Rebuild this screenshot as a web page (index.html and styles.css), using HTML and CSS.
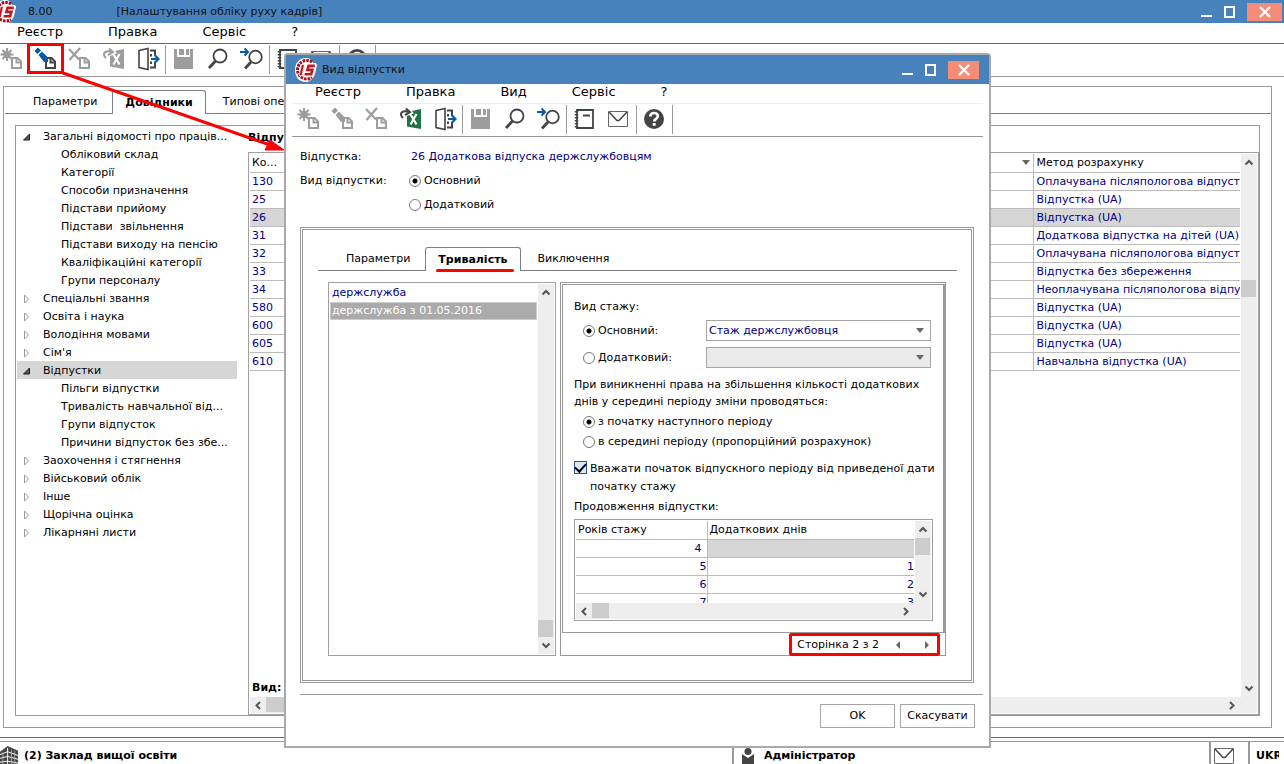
FILE: index.html
```html
<!DOCTYPE html>
<html lang="uk">
<head>
<meta charset="utf-8">
<title>Налаштування обліку руху кадрів</title>
<link rel="stylesheet" href="styles.css">
</head>
<body>
<svg class="defs" aria-hidden="true">
  <symbol id="logo" viewBox="0 0 24 26">
    <path d="M12 1c4 0 6 2 7 5h3l1 2-2 9c-2 5-5 8-9 8C5 25 1 20 1 13S5 1 12 1z" fill="#fff"/>
    <path d="M18 5A9.300 9.300 0 1 0 18 20.500" fill="none" stroke="#a01018" stroke-width="3" stroke-dasharray="2.500 1"/>
    <path d="M7.500 7.500h2.900l-2.400 11H5.100z" fill="#c01820" stroke="#fff" stroke-width=".6"/>
    <path d="M20.800 8.900h-6.200l-1.200 4h5l-1.200 4.300h-6.600" fill="none" stroke="#c01820" stroke-width="2.600"/>
  </symbol>
  <symbol id="page" viewBox="0 0 24 24">
    <path d="M12 11h5.500l3.500 3.500v6.500H12z" fill="#fff" stroke="currentColor" stroke-width="2"/>
    <path d="M16.500 11v4.500H21" fill="none" stroke="currentColor" stroke-width="2"/>
  </symbol>
  <symbol id="new" viewBox="0 0 24 24">
    <path d="M7 1v13M.5 7.500h13M2.400 3l9.200 9M11.600 3l-9.200 9" stroke="currentColor" stroke-width="2" fill="none"/>
    <circle cx="7" cy="7.500" r="3.800" fill="currentColor"/>
    <use href="#page"/>
  </symbol>
  <symbol id="edit" viewBox="0 0 24 24">
    <use href="#page"/>
    <path d="M.5 4l3.500-3.500 3 3L3.500 7zM4.500 8l3.500-3.500 6 6v4.500h-4z" class="pen"/>
  </symbol>
  <symbol id="delete" viewBox="0 0 24 24">
    <path d="M1 2l10 10.500M12 1L1.500 13" stroke="currentColor" stroke-width="2.200" fill="none"/>
    <use href="#page"/>
  </symbol>
  <symbol id="excel" viewBox="0 0 24 24">
    <path d="M8 5l14-3v20L8 19.500z" class="sheet"/>
    <path d="M11.500 7.500l6 10M17.500 7l-6 10.500" stroke="#fff" stroke-width="2.200" fill="none"/>
    <path d="M3 10C-1 5 4 2 9 4.500M7.500 1l4 4.500-5.500 2" stroke="#fff" stroke-width="4" fill="none"/>
    <path d="M4 11C-1 6 4 3 10 5M7 1.500l4 3.700-5 3" stroke="currentColor" stroke-width="2" fill="none"/>
  </symbol>
  <symbol id="exit" viewBox="0 0 24 24">
    <path d="M3 3.500l9-2v21l-9-2z" fill="#fff" stroke="#444" stroke-width="1.600"/>
    <path d="M14 3.500h5V8M19 16v4.500h-5M15 7v2.500M15 14.500V17" fill="none" stroke="#444" stroke-width="2"/>
    <path d="M15 12h7M18.500 8l4 4-4 4" fill="none" stroke="#0b58a5" stroke-width="2.200"/>
  </symbol>
  <symbol id="save" viewBox="0 0 24 24">
    <path d="M2 2h3v8h13V2h3v20H2z" fill="#9d9d9d"/>
    <path d="M7 2h5v6H7zM14 2h3v6h-3z" fill="#9d9d9d"/>
  </symbol>
  <symbol id="find" viewBox="0 0 24 24">
    <circle cx="14" cy="9" r="6.500" fill="#fff" stroke="#444" stroke-width="1.800"/>
    <path d="M9.500 14L3 21" stroke="#444" stroke-width="2.800"/>
  </symbol>
  <symbol id="findnext" viewBox="0 0 24 24">
    <circle cx="15.500" cy="10" r="6.300" fill="#fff" stroke="#444" stroke-width="1.800"/>
    <path d="M11 15l-6 6.500" stroke="#444" stroke-width="2.800"/>
    <path d="M0 5h8M4.500 1.500L8 5 4.500 8.500" fill="none" stroke="#0b58a5" stroke-width="2"/>
  </symbol>
  <symbol id="book" viewBox="0 0 24 24">
    <path d="M4 3h16v18H4z" fill="#fff" stroke="#444" stroke-width="1.800"/>
    <path d="M3.500 4v17" stroke="#444" stroke-width="3.500" stroke-dasharray="1.500 1.500"/>
    <path d="M6.500 4v16" stroke="#fff" stroke-width="1"/>
    <path d="M10 8.500h7" stroke="#444" stroke-width="2"/>
  </symbol>
  <symbol id="mail" viewBox="0 0 24 24">
    <path d="M1.500 4.500h19v15h-19z" fill="#fff" stroke="#666"/>
    <path d="M2 5l8 8.500h2L20 5" fill="none" stroke="#444" stroke-width="1.500"/>
  </symbol>
  <symbol id="help" viewBox="0 0 24 24">
    <circle cx="11" cy="12" r="10" fill="#444"/>
    <path d="M7.200 9.500C7.500 4.800 15 5 14.800 9.200c-.1 2.600-3.600 2.800-3.600 5.300" fill="none" stroke="#fff" stroke-width="2.600"/>
    <path d="M9.800 16h2.800v2.800h-2.800z" fill="#fff"/>
  </symbol>
  <symbol id="min" viewBox="0 0 12 14"><path d="M0 10h11v2H0z" fill="#fff"/></symbol>
  <symbol id="max" viewBox="0 0 12 14"><path d="M1 2h9v10H1z" fill="none" stroke="#fff" stroke-width="2"/></symbol>
  <symbol id="close" viewBox="0 0 12 14"><path d="M1 2l10 10M11 2L1 12" fill="none" stroke="#fff" stroke-width="2.400"/></symbol>
  <symbol id="chev" viewBox="0 0 16 16"><path d="M4.500 10L8 6.500l3.500 3.500" fill="none" stroke="#555" stroke-width="2"/></symbol>
  <symbol id="open" viewBox="0 0 10 10"><path d="M7.500 2v6h-6z" fill="#555" stroke="#222"/></symbol>
  <symbol id="shut" viewBox="0 0 10 10"><path d="M2.500 1v8l4-4z" fill="#fff" stroke="#999"/></symbol>
  <symbol id="drop" viewBox="0 0 8 6"><path d="M0 0h8L4 5z" fill="#666"/></symbol>
</svg>

<div class="app">
  <header class="titlebar">
    <svg class="logo"><use href="#logo"/></svg>
    <span class="version">8.00</span>
    <span class="caption">[Налаштування обліку руху кадрів]</span>
    <button class="wbtn" aria-label="Згорнути"><svg><use href="#min"/></svg></button>
    <button class="wbtn" aria-label="Розгорнути"><svg><use href="#max"/></svg></button>
    <button class="wbtn wclose" aria-label="Закрити"><svg><use href="#close"/></svg></button>
  </header>
  <nav class="menu">
    <button>Реєстр</button><button>Правка</button><button>Сервіс</button><button>?</button>
  </nav>
  <div class="toolbar">
    <button class="tool off" aria-label="Створити"><svg><use href="#new"/></svg></button>
    <button class="tool" aria-label="Змінити"><svg><use href="#edit"/></svg></button>
    <button class="tool off" aria-label="Видалити"><svg><use href="#delete"/></svg></button>
    <button class="tool off" aria-label="Експорт"><svg><use href="#excel"/></svg></button>
    <button class="tool" aria-label="Вихід"><svg><use href="#exit"/></svg></button>
    <i class="sep"></i>
    <button class="tool" aria-label="Зберегти"><svg><use href="#save"/></svg></button>
    <button class="tool" aria-label="Знайти"><svg><use href="#find"/></svg></button>
    <button class="tool" aria-label="Знайти далі"><svg><use href="#findnext"/></svg></button>
    <i class="sep"></i>
    <button class="tool" aria-label="Журнал"><svg><use href="#book"/></svg></button>
    <button class="tool" aria-label="Пошта"><svg><use href="#mail"/></svg></button>
    <i class="sep"></i>
    <button class="tool" aria-label="Довідка"><svg><use href="#help"/></svg></button>
    <i class="sep"></i>
  </div>

  <main class="frame">
    <div class="tabs">
      <button class="tab">Параметри</button>
      <button class="tab active">Довідники</button>
      <button class="tab">Типові операції</button>
      <i class="rest"></i>
    </div>
    <div class="workspace">
      <ul class="tree">
        <li><svg><use href="#open"/></svg><span>Загальні відомості про праців...</span></li>
        <li class="sub">Обліковий склад</li>
        <li class="sub">Категорії</li>
        <li class="sub">Способи призначення</li>
        <li class="sub">Підстави прийому</li>
        <li class="sub">Підстави &nbsp;звільнення</li>
        <li class="sub">Підстави виходу на пенсію</li>
        <li class="sub">Кваліфікаційні категорії</li>
        <li class="sub">Групи персоналу</li>
        <li><svg><use href="#shut"/></svg><span>Спеціальні звання</span></li>
        <li><svg><use href="#shut"/></svg><span>Освіта і наука</span></li>
        <li><svg><use href="#shut"/></svg><span>Володіння мовами</span></li>
        <li><svg><use href="#shut"/></svg><span>Сім'я</span></li>
        <li class="selected"><svg><use href="#open"/></svg><span>Відпустки</span></li>
        <li class="sub">Пільги відпустки</li>
        <li class="sub">Тривалість навчальної від...</li>
        <li class="sub">Групи відпусток</li>
        <li class="sub">Причини відпусток без збе...</li>
        <li><svg><use href="#shut"/></svg><span>Заохочення і стягнення</span></li>
        <li><svg><use href="#shut"/></svg><span>Військовий облік</span></li>
        <li><svg><use href="#shut"/></svg><span>Інше</span></li>
        <li><svg><use href="#shut"/></svg><span>Щорічна оцінка</span></li>
        <li><svg><use href="#shut"/></svg><span>Лікарняні листи</span></li>
      </ul>
      <section class="leaves">
        <h2>Відпустки</h2>
        <div class="grid">
          <div class="grid-body">
            <table class="leave-table">
              <thead><tr><th class="code">Ко...</th><th class="name"><svg class="drop"><use href="#drop"/></svg></th><th class="method">Метод розрахунку</th></tr></thead>
              <tbody>
                <tr><td>130</td><td></td><td>Оплачувана післяпологова відпустка</td></tr>
                <tr><td>25</td><td></td><td>Відпустка (UA)</td></tr>
                <tr class="selected"><td>26</td><td></td><td>Відпустка (UA)</td></tr>
                <tr><td>31</td><td></td><td>Додаткова відпустка на дітей (UA)</td></tr>
                <tr><td>32</td><td></td><td>Оплачувана післяпологова відпустка</td></tr>
                <tr><td>33</td><td></td><td>Відпустка без збереження</td></tr>
                <tr><td>34</td><td></td><td>Неоплачувана післяпологова відпустка</td></tr>
                <tr><td>580</td><td></td><td>Відпустка (UA)</td></tr>
                <tr><td>600</td><td></td><td>Відпустка (UA)</td></tr>
                <tr><td>605</td><td></td><td>Відпустка (UA)</td></tr>
                <tr><td>610</td><td></td><td>Навчальна відпустка (UA)</td></tr>
              </tbody>
            </table>
            <strong class="kind">Вид:</strong>
          </div>
          <div class="vscroll"><svg><use href="#chev"/></svg><i style="flex-grow:109"></i><b></b><i style="flex-grow:383"></i><svg class="down"><use href="#chev"/></svg></div>
          <div class="hscroll"><svg class="left"><use href="#chev"/></svg><b class="wide"></b><i class="grow"></i><svg class="right"><use href="#chev"/></svg></div>
          <div class="corner"></div>
        </div>
      </section>
    </div>
  </main>

  <footer class="status">
    <div><svg class="office" viewBox="0 0 20 22"><path d="M0 7l8-6 11 5v16H0z" fill="#444"/><path d="M8 3v19M0 10l8-3 11 4M0 14l8-2 11 3M0 18l8-1 11 2" fill="none" stroke="#fff"/><path d="M12 5v17M15.500 6v16M3 8v14" stroke="#bbb" stroke-width=".8"/></svg><span>(2) Заклад вищої освіти</span></div>
    <div class="user"><svg viewBox="0 0 12 16"><path d="M0 6l6 4 6-4v10H0z" fill="#444"/><circle cx="6" cy="3.500" r="3.500" fill="#444"/></svg><span>Адміністратор</span></div>
    <div class="post"><svg><use href="#mail"/></svg></div>
    <div class="lang"><span>UKR</span></div>
  </footer>
</div>

<section class="dialog" role="dialog" aria-label="Вид відпустки">
  <header class="titlebar">
    <svg class="logo"><use href="#logo"/></svg>
    <span class="caption">Вид відпустки</span>
    <button class="wbtn" aria-label="Згорнути"><svg><use href="#min"/></svg></button>
    <button class="wbtn" aria-label="Розгорнути"><svg><use href="#max"/></svg></button>
    <button class="wbtn wclose" aria-label="Закрити"><svg><use href="#close"/></svg></button>
  </header>
  <nav class="menu">
    <button>Реєстр</button><button>Правка</button><button>Вид</button><button>Сервіс</button><button>?</button>
  </nav>
  <div class="toolbar">
    <button class="tool off" aria-label="Створити"><svg><use href="#new"/></svg></button>
    <button class="tool off" aria-label="Змінити"><svg><use href="#edit"/></svg></button>
    <button class="tool off" aria-label="Видалити"><svg><use href="#delete"/></svg></button>
    <button class="tool" aria-label="Експорт"><svg><use href="#excel"/></svg></button>
    <button class="tool" aria-label="Вихід"><svg><use href="#exit"/></svg></button>
    <i class="sep"></i>
    <button class="tool" aria-label="Зберегти"><svg><use href="#save"/></svg></button>
    <button class="tool" aria-label="Знайти"><svg><use href="#find"/></svg></button>
    <button class="tool" aria-label="Знайти далі"><svg><use href="#findnext"/></svg></button>
    <i class="sep"></i>
    <button class="tool" aria-label="Журнал"><svg><use href="#book"/></svg></button>
    <button class="tool" aria-label="Пошта"><svg><use href="#mail"/></svg></button>
    <i class="sep"></i>
    <button class="tool" aria-label="Довідка"><svg><use href="#help"/></svg></button>
    <i class="sep"></i>
  </div>

  <div class="summary">
    <span>Відпустка:</span><span class="value">26 Додаткова відпуска держслужбовцям</span>
    <span>Вид відпустки:</span><label><input type="radio" name="kind" checked>Основний</label>
    <label class="second"><input type="radio" name="kind">Додатковий</label>
  </div>

  <div class="panel">
    <div class="tabs">
      <button class="tab">Параметри</button>
      <button class="tab active">Тривалість</button>
      <button class="tab">Виключення</button>
      <i class="rest"></i>
    </div>
    <div class="columns">
      <div class="listbox">
        <ul role="listbox" aria-label="Тривалість">
          <li role="option">держслужба</li>
          <li role="option" aria-selected="true" class="picked">держслужба з 01.05.2016</li>
        </ul>
        <div class="vscroll"><svg><use href="#chev"/></svg><i class="grow"></i><b></b><svg class="down"><use href="#chev"/></svg></div>
      </div>
      <div class="pages">
        <div class="page">
          <div class="line">Вид стажу:</div>
          <div class="stage">
            <label><input type="radio" name="stage" checked>Основний:</label>
            <div class="combo"><select aria-label="Основний стаж"><option>Стаж держслужбовця</option></select><svg class="drop"><use href="#drop"/></svg></div>
            <label><input type="radio" name="stage">Додатковий:</label>
            <div class="combo"><select aria-label="Додатковий стаж" disabled><option></option></select><svg class="drop"><use href="#drop"/></svg></div>
          </div>
          <p class="note">При виникненні права на збільшення кількості додаткових<br>днів у середині періоду зміни проводяться:</p>
          <div class="when">
            <label><input type="radio" name="when" checked>з початку наступного періоду</label>
            <label><input type="radio" name="when">в середині періоду (пропорційний розрахунок)</label>
          </div>
          <label class="check"><input type="checkbox" checked><span>Вважати початок відпускного періоду від приведеної дати<br>початку стажу</span></label>
          <div class="line ext">Продовження відпустки:</div>
          <div class="grid days">
            <div class="grid-body">
              <table>
                <thead><tr><th class="years">Років стажу</th><th>Додаткових днів</th></tr></thead>
                <tbody>
                  <tr><td class="editing">4</td><td class="cursor"></td></tr>
                  <tr><td>5</td><td>1</td></tr>
                  <tr><td>6</td><td>2</td></tr>
                  <tr><td>7</td><td>3</td></tr>
                </tbody>
              </table>
            </div>
            <div class="vscroll"><svg><use href="#chev"/></svg><b></b><i class="grow"></i><svg class="down"><use href="#chev"/></svg></div>
            <div class="hscroll"><svg class="left"><use href="#chev"/></svg><b></b><i class="grow"></i><svg class="right"><use href="#chev"/></svg></div>
            <div class="corner"></div>
          </div>
        </div>
        <div class="pager">
          <span>Сторінка 2 з 2</span>
          <button aria-label="Попередня"><svg viewBox="0 0 5 8"><path d="M4 0v8L0 4z" fill="#666"/></svg></button>
          <button aria-label="Наступна"><svg viewBox="0 0 5 8"><path d="M0 0v8l4-4z" fill="#666"/></svg></button>
        </div>
      </div>
    </div>
  </div>

  <div class="actions">
    <button>OK</button><button>Скасувати</button>
  </div>
</section>

<svg class="pointer" width="300" height="160" aria-hidden="true">
  <rect x="28.500" y="44.500" width="34" height="28" fill="none" stroke="#f00" stroke-width="3"/>
  <path d="M63 73l210 73" stroke="#f00" stroke-width="3"/>
  <path d="M284 150l-14-10-5 10z" fill="#f00" stroke="#f00"/>
</svg>
</body>
</html>
```
FILE: styles.css
```css
* { box-sizing: border-box; }
body {
  margin: 0;
  position: relative;
  height: 100vh;
  overflow: hidden;
  background: #fff;
  color: #000;
  font: 11px/18px "DejaVu Sans", Verdana, sans-serif;
}
button, select, input { font: inherit; color: inherit; margin: 0; padding: 0; }
button { border: 0; background: none; white-space: nowrap; }
ul { list-style: none; margin: 0; padding: 0; }
svg { display: block; flex: none; }
.defs { position: absolute; width: 0; height: 0; }

.app { display: flex; flex-direction: column; height: 100%; }

/* title bars */
.titlebar {
  display: flex;
  align-items: center;
  flex: none;
  height: 23px;
  background: #4782bd;
  color: #111;
  overflow: hidden;
}
.titlebar .logo { width: 24px; height: 26px; margin: 0 11px 0 -7px; }
.version { margin-right: 64px; }
.caption { flex: 1; }
.wbtn { display: grid; place-items: center; width: 23px; height: 18px; }
.wbtn svg { width: 12px; height: 14px; }
.wclose { width: 35px; margin: 0 2px 0 6px; background: #f48c78; }

/* menus and toolbars */
.menu {
  display: flex;
  flex: none;
  gap: 45px;
  height: 21px;
  padding-left: 17px;
  border-bottom: 1px solid #666;
  font-size: 13px;
}
.menu button { line-height: 16px; padding-bottom: 3px; }
.toolbar {
  display: flex;
  flex: none;
  height: 33px;
  margin-left: -5px;
  border-bottom: 1px solid #999;
}
.tool { --pen: #0b58a5; --sheet: #1f7244; display: grid; place-items: center; flex: none; width: 34px; height: 30px; color: #444; }
.tool svg { width: 24px; height: 24px; }
.sep { width: 2px; margin: 1px 0 2px; border-left: 1px solid #999; }
.pen { fill: var(--pen); }
.sheet { fill: var(--sheet); }
.tool.off { --pen: #9d9d9d; --sheet: #9d9d9d; color: #9d9d9d; }

/* tabs */
.tabs { display: flex; flex: none; height: 24px; }
.tab { border-bottom: 1px solid #808080; }
.tab.active {
  position: relative;
  border: 1px solid #808080;
  border-bottom: 0;
  border-radius: 3px 3px 0 0;
  font-weight: bold;
}
.rest { flex: 1; border-bottom: 1px solid #808080; }

/* main window */
.frame {
  flex: 1;
  display: flex;
  flex-direction: column;
  min-height: 0;
  margin: 9px 12px 9px 3px;
  padding: 3px 0 11px 1px;
  border: 1px solid #999;
}
.tabs .tab { padding: 0 15px 0 28px; }
.tabs .tab.active { padding: 0 12px; }
.tabs .tab.active + .tab { padding-left: 17px; }
.workspace {
  flex: 1;
  display: flex;
  min-height: 0;
  margin: 11px 11px 0 10px;
  border: 1px solid #999;
}
.tree { width: 221px; padding: 1px 0 0 1px; margin-right: 11px; flex: none; }
.tree li { display: flex; align-items: center; height: 18px; padding-top: 2px; line-height: 16px; white-space: nowrap; }
.tree svg { width: 10px; height: 10px; margin: 0 11px 0 5px; }
.tree .sub { padding-left: 44px; }
.selected { background: #d6d6d6; }
.leaves { flex: 1; display: flex; flex-direction: column; min-width: 0; }
h2 { margin: 0; padding: 3px 0 5px; font-size: 11px; line-height: 18px; }

.grid {
  flex: 1;
  display: grid;
  grid-template-columns: minmax(0, 1fr) 17px;
  grid-template-rows: minmax(0, 1fr) 16px;
  min-height: 0;
  padding: 1px;
  border: 1px solid #a0a0a4;
}
.grid-body { display: flex; flex-direction: column; justify-content: space-between; min-height: 0; overflow: hidden; }
table { width: 100%; border-collapse: collapse; table-layout: fixed; }
th, td {
  height: 18px;
  padding: 0 0 0 2px;
  border-right: 1px solid #bbb;
  border-bottom: 1px solid #bbb;
  font-weight: normal;
  line-height: 17px;
  text-align: left;
  white-space: nowrap;
  overflow: hidden;
}
th:last-child, td:last-child { border-right: 0; }
td { color: #000080; }
.code { width: 60px; }
.method { width: 207px; }
.leave-table tr > :last-child { padding-left: 3px; }
.name { padding-right: 3px; }
.drop { width: 8px; height: 6px; }
.name .drop { margin-left: auto; }
.kind { padding-left: 2px; }

/* scroll bars */
.vscroll, .hscroll { display: flex; background: #eee; }
.vscroll { flex-direction: column; width: 16px; margin-left: 1px; }
.hscroll { height: 16px; }
.corner { background: #eee; }
.vscroll svg, .hscroll svg { width: 16px; height: 17px; }
.vscroll i, .hscroll i { flex: 0 1 0; }
.vscroll .grow, .hscroll .grow { flex: 1; }
.vscroll b { width: 15px; height: 17px; background: #ccc; }
.hscroll b { width: 17px; height: 15px; background: #ccc; }
.hscroll .wide { width: 400px; }
.down { transform: rotate(180deg); }
.left { transform: rotate(-90deg); }
.right { transform: rotate(90deg); }

/* status bar */
.status {
  display: grid;
  grid-template-columns: 57% 1fr 39px 36px;
  flex: none;
  height: 27px;
  padding-top: 3px;
  border-top: 1px solid #666;
  font-weight: bold;
}
.status div { display: flex; align-items: center; border-top: 1px solid #999; padding-top: 5px; overflow: hidden; white-space: nowrap; }
.status div + div { border-left: 2px solid #999; }
.office { width: 19px; height: 21px; margin-right: 5px; }
.user svg { width: 12px; height: 16px; margin: 0 10px 0 8px; }
.post svg { width: 24px; height: 24px; margin-left: 2px; }
.lang span { width: 23px; margin-left: 6px; overflow: hidden; }

/* dialog window */
.dialog {
  position: absolute;
  inset: 53px 293px 16px 284px;
  display: flex;
  flex-direction: column;
  border: 2px solid #a9a9ad;
  border-radius: 4px 4px 0 0;
  background: #fff;
}
.dialog .titlebar { height: 29px; }
.dialog .titlebar .logo { margin: 0 4px 0 8px; }
.dialog .wclose { width: 31px; margin-right: 10px; }
.dialog .menu { height: 20px; margin: 0 6px 0 7px; padding-left: 22px; border-color: #eee; }
.dialog .toolbar { margin: 0 6px; }
.summary {
  display: grid;
  grid-template-columns: 109px 1fr;
  grid-auto-rows: 24px;
  align-items: center;
  padding: 8px 14px 0;
}
.value { padding-left: 2px; color: #000080; }
.second { grid-column: 2; }
label { display: flex; align-items: center; white-space: nowrap; }
input[type="radio"] {
  appearance: none;
  width: 12px;
  height: 12px;
  margin-right: 3px;
  border: 1px solid #777;
  border-radius: 50%;
  background: #fff;
}
input[type="radio"]:checked { background: radial-gradient(circle, #000 2px, #fff 3px); }

.panel {
  flex: 1;
  display: flex;
  flex-direction: column;
  min-height: 0;
  margin: 10px 15px 0 14px;
  padding: 17px 14px 24px 15px;
  border: 3px double #999;
}
.panel .tab.active::after {
  content: "";
  position: absolute;
  inset: auto 6px -1px 10px;
  height: 3px;
  border-radius: 2px;
  background: #f00;
}
.columns { flex: 1; display: flex; gap: 4px; min-height: 0; padding: 11px 11px 0 10px; }
.listbox { display: flex; flex: none; width: 228px; padding: 1px; border: 1px solid #a0a0a4; }
.listbox ul { flex: 1; }
.listbox li { height: 18px; padding-left: 2px; color: #000080; }
.listbox .picked { padding-left: 1px; border: 1px solid #ccc; background: #aaa; color: #fff; line-height: 16px; }
.pages { flex: 1; display: flex; flex-direction: column; min-width: 0; min-height: 0; padding: 1px 0 0 1px; border: 1px solid #999; }
.page { flex: 1; display: flex; flex-direction: column; min-height: 0; padding: 13px 10px 11px 11px; border: 1px solid #999; border-right-width: 2px; }
.stage { display: grid; grid-template-columns: 132px 225px; gap: 6px 0; margin-top: 4px; }
.stage label, .when label { padding-left: 9px; }
.combo { display: grid; grid-template-columns: 1fr 18px; align-items: center; }
.combo select { grid-area: 1 / 1 / 2 / 3; height: 21px; padding-left: 2px; border: 1px solid #a5a5a5; border-radius: 0; background: #fff; color: #000080; appearance: none; opacity: 1; }
.combo select:disabled { background: #eaeaea; }
.combo .drop { grid-area: 1 / 2; pointer-events: none; margin-left: 3px; }
.note { margin: 8px 0 2px; line-height: 17px; white-space: nowrap; }
.when label { height: 20px; }
.check { align-items: flex-start; margin-top: 8px; }
.check input {
  appearance: none;
  flex: none;
  width: 13px;
  height: 13px;
  margin: 1px 3px 0 0;
  border: 1px solid #2b568c;
  background: #d9e8fb;
  display: grid;
  place-items: center;
}
.check input:checked::after { content: ""; width: 9px; height: 5px; border: solid #000; border-width: 0 0 2px 2px; transform: translateY(-1px) rotate(-48deg); }
.ext { margin: 2px 0 3px; }
.days { width: 359px; flex: 1; }
.years { width: 131px; }
.days td { text-align: right; }
.days .editing { padding-right: 5px; }
.days .cursor { background: #d6d6d6; }
.pager {
  display: flex;
  flex: none;
  align-items: center;
  align-self: flex-end;
  height: 23px;
  margin: 0 5px -1px 0;
  padding: 0 7px 0 5px;
  border: 3px solid #f00;
  border-radius: 2px;
}
.pager button { width: 5px; margin-left: 17px; }
.pager button + button { margin-left: 24px; }
.pager svg { width: 5px; height: 8px; }

.actions {
  display: flex;
  justify-content: flex-end;
  gap: 5px;
  margin: 11px 6px 0 14px;
  padding: 9px 8px 18px;
  border-top: 1px solid #999;
}
.actions button { min-width: 75px; height: 24px; border: 1px solid #a5a5a5; }

.pointer { position: absolute; top: 0; left: 0; pointer-events: none; }
```
